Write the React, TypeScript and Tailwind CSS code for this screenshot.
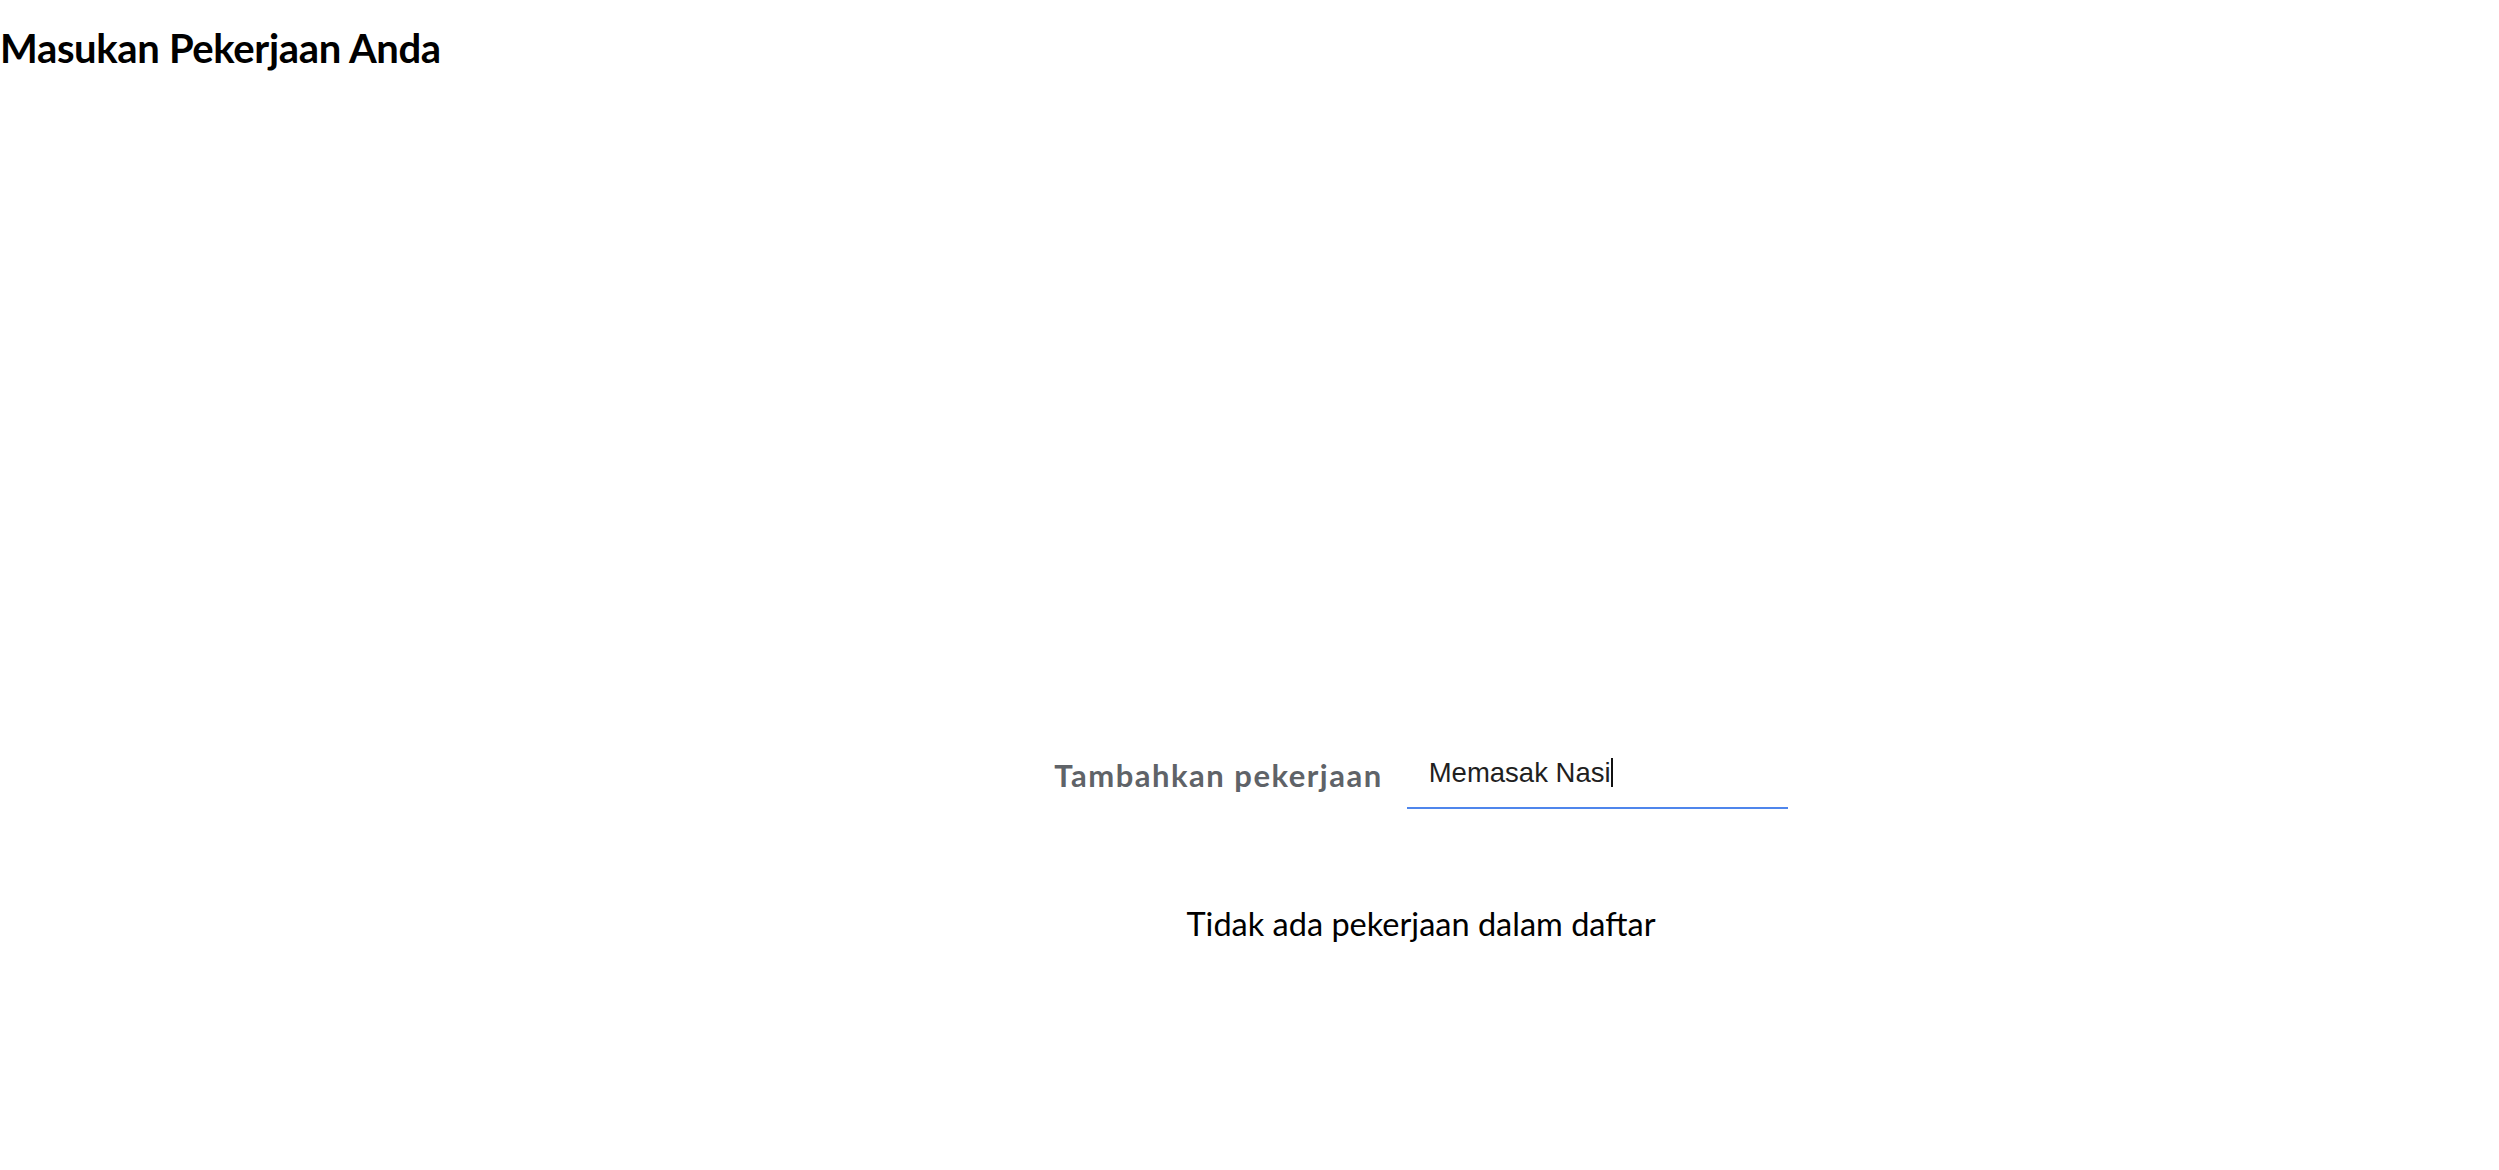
import React from "react";

export default function App() {
  return (
    <div className="min-h-screen w-full bg-white text-black">
      <h1 className="m-0 pt-[24px] font-['Lato','Noto_Sans',sans-serif] text-[length:40px] font-bold leading-[48px] tracking-[-0.35px] text-black">
        Masukan Pekerjaan Anda
      </h1>
      <div className="ml-[343px] mt-[666px] flex flex-col items-center">
        <div className="flex items-end gap-[24px]">
          <span className="mb-[15px] block font-['Lato','Noto_Sans',sans-serif] text-[length:31px] font-bold leading-[37px] tracking-[1.5px] text-[color:#5f6368]">
            Tambahkan pekerjaan
          </span>
          <div className="relative">
            <input
              type="text"
              defaultValue="Memasak Nasi"
              className="block h-[71px] w-[381px] border-0 border-b-2 border-[#4f86ec] bg-transparent pl-[22px] font-['Liberation_Sans',Arial,sans-serif] text-[length:27.5px] text-[color:#1f1f1f] outline-none"
            />
            <span className="pointer-events-none absolute left-[204px] top-[20px] h-[29px] w-[2px] bg-[#111]" />
          </div>
        </div>
        <p className="mt-[96px] font-['Lato','Noto_Sans',sans-serif] text-[length:32.5px] leading-[38px] text-black">
          Tidak ada pekerjaan dalam daftar
        </p>
      </div>
    </div>
  );
}
